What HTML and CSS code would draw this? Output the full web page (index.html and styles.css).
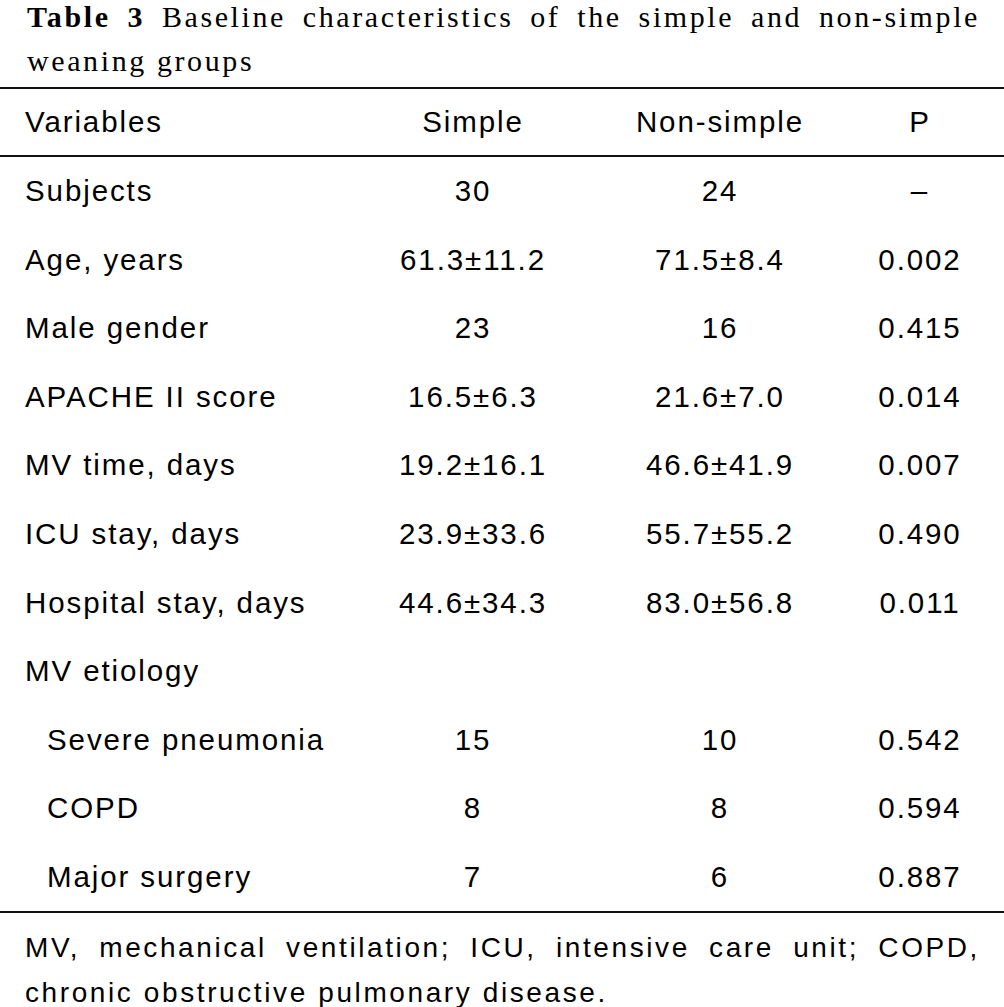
FILE: index.html
```html
<!DOCTYPE html>
<html lang="en">
<head>
<meta charset="utf-8">
<title>Table 3</title>
<link rel="stylesheet" href="styles.css">
</head>
<body>
<div class="page">
  <p class="caption"><b>Table 3</b> Baseline characteristics of the simple and non-simple weaning groups</p>
  <table class="data">
    <colgroup>
      <col class="c-var"><col class="c-simple"><col class="c-non"><col class="c-p">
    </colgroup>
    <thead>
      <tr><th class="var">Variables</th><th>Simple</th><th>Non-simple</th><th class="p">P</th></tr>
    </thead>
    <tbody>
      <tr><td class="var">Subjects</td><td>30</td><td>24</td><td class="p">–</td></tr>
      <tr><td class="var">Age, years</td><td>61.3±11.2</td><td>71.5±8.4</td><td class="p">0.002</td></tr>
      <tr><td class="var">Male gender</td><td>23</td><td>16</td><td class="p">0.415</td></tr>
      <tr><td class="var">APACHE II score</td><td>16.5±6.3</td><td>21.6±7.0</td><td class="p">0.014</td></tr>
      <tr><td class="var">MV time, days</td><td>19.2±16.1</td><td>46.6±41.9</td><td class="p">0.007</td></tr>
      <tr><td class="var">ICU stay, days</td><td>23.9±33.6</td><td>55.7±55.2</td><td class="p">0.490</td></tr>
      <tr><td class="var">Hospital stay, days</td><td>44.6±34.3</td><td>83.0±56.8</td><td class="p">0.011</td></tr>
      <tr><td class="var">MV etiology</td><td></td><td></td><td class="p"></td></tr>
      <tr><td class="var sub">Severe pneumonia</td><td>15</td><td>10</td><td class="p">0.542</td></tr>
      <tr><td class="var sub">COPD</td><td>8</td><td>8</td><td class="p">0.594</td></tr>
      <tr><td class="var sub">Major surgery</td><td>7</td><td>6</td><td class="p">0.887</td></tr>
    </tbody>
  </table>
  <p class="note">MV, mechanical ventilation; ICU, intensive care unit; COPD, chronic obstructive pulmonary disease.</p>
</div>
</body>
</html>
```

FILE: styles.css
```css
html, body {
  margin: 0;
  padding: 0;
  background: #fff;
  color: #000;
}

.page {
  width: 1004px;
}

.caption {
  margin: -5px 0 0 0;
  padding: 0 24px 0 27px;
  font-family: "Liberation Serif", "Times New Roman", serif;
  font-size: 30px;
  line-height: 44px;
  letter-spacing: 2.6px;
  text-align: justify;
  color: #000;
}

.caption b {
  font-weight: bold;
}

.data {
  width: 1004px;
  margin-top: 4px;
  border-collapse: collapse;
  table-layout: fixed;
  font-family: "Liberation Sans", Arial, Helvetica, sans-serif;
  font-size: 29.5px;
  letter-spacing: 1.9px;
  color: #000;
}

.c-var { width: 380px; }
.c-simple { width: 186px; }
.c-non { width: 308px; }
.c-p { width: 130px; }

.data thead tr {
  border-top: 2px solid #111;
  border-bottom: 2px solid #111;
}

.data tbody tr:last-child {
  border-bottom: 2px solid #111;
}

.data th,
.data td {
  padding: 0;
  font-weight: normal;
  text-align: center;
  white-space: nowrap;
}

.data th {
  height: 66px;
}

.data td {
  height: 68.55px;
}

.data .var {
  text-align: left;
  padding-left: 25px;
}

.data .var.sub {
  padding-left: 47px;
}

.data .p {
  padding-right: 38px;
}

.note {
  margin: 12px 0 0 0;
  padding: 0 24px 0 25px;
  font-family: "Liberation Sans", Arial, Helvetica, sans-serif;
  font-size: 28px;
  line-height: 45px;
  letter-spacing: 2.6px;
  text-align: justify;
  color: #000;
}
```
